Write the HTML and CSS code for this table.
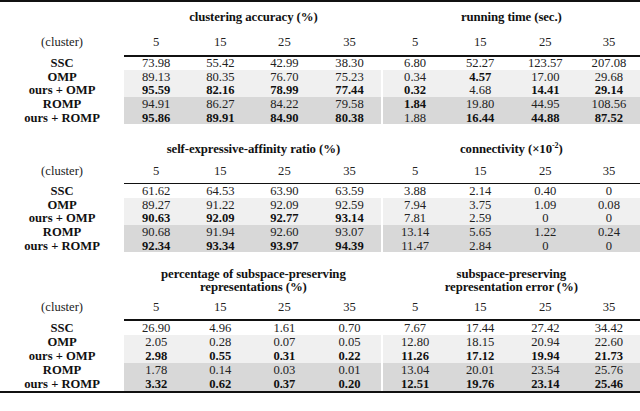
FILE: index.html
```html
<!DOCTYPE html>
<html lang="en">
<head>
<meta charset="utf-8">
<title>Results table</title>
<link rel="stylesheet" href="styles.css">
</head>
<body>
<table class="results">
  <colgroup>
    <col class="c-label">
    <col class="c-l"><col class="c-l"><col class="c-l"><col class="c-l c-gap">
    <col class="c-r"><col class="c-r"><col class="c-r"><col class="c-r c-last">
  </colgroup>

  <tbody class="panel p1">
    <tr class="head"><td></td><th colspan="4">clustering accuracy (%)</th><th colspan="4">running time (sec.)</th></tr>
    <tr class="clusters"><td class="label">(cluster)</td><td>5</td><td>15</td><td>25</td><td class="gap">35</td><td>5</td><td>15</td><td>25</td><td>35</td></tr>
    <tr class="rule"><td class="blank"></td><td colspan="8" class="line"></td></tr>
    <tr class="row ssc"><th class="label">SSC</th><td>73.98</td><td>55.42</td><td>42.99</td><td class="gap">38.30</td><td>6.80</td><td>52.27</td><td>123.57</td><td>207.08</td></tr>
    <tr class="row omp"><th class="label">OMP</th><td>89.13</td><td>80.35</td><td>76.70</td><td class="gap">75.23</td><td>0.34</td><td class="b">4.57</td><td>17.00</td><td>29.68</td></tr>
    <tr class="row omp"><th class="label">ours + OMP</th><td class="b">95.59</td><td class="b">82.16</td><td class="b">78.99</td><td class="gap b">77.44</td><td class="b">0.32</td><td>4.68</td><td class="b">14.41</td><td class="b">29.14</td></tr>
    <tr class="row romp"><th class="label">ROMP</th><td>94.91</td><td>86.27</td><td>84.22</td><td class="gap">79.58</td><td class="b">1.84</td><td>19.80</td><td>44.95</td><td>108.56</td></tr>
    <tr class="row romp"><th class="label">ours + ROMP</th><td class="b">95.86</td><td class="b">89.91</td><td class="b">84.90</td><td class="gap b">80.38</td><td>1.88</td><td class="b">16.44</td><td class="b">44.88</td><td class="b">87.52</td></tr>
  </tbody>

  <tbody class="panel p2">
    <tr class="head"><td></td><th colspan="4">self-expressive-affinity ratio (%)</th><th colspan="4">connectivity (×10<sup>-2</sup>)</th></tr>
    <tr class="clusters"><td class="label">(cluster)</td><td>5</td><td>15</td><td>25</td><td class="gap">35</td><td>5</td><td>15</td><td>25</td><td>35</td></tr>
    <tr class="rule"><td class="blank"></td><td colspan="8" class="line"></td></tr>
    <tr class="row ssc"><th class="label">SSC</th><td>61.62</td><td>64.53</td><td>63.90</td><td class="gap">63.59</td><td>3.88</td><td>2.14</td><td>0.40</td><td>0</td></tr>
    <tr class="row omp"><th class="label">OMP</th><td>89.27</td><td>91.22</td><td>92.09</td><td class="gap">92.59</td><td>7.94</td><td>3.75</td><td>1.09</td><td>0.08</td></tr>
    <tr class="row omp"><th class="label">ours + OMP</th><td class="b">90.63</td><td class="b">92.09</td><td class="b">92.77</td><td class="gap b">93.14</td><td>7.81</td><td>2.59</td><td>0</td><td>0</td></tr>
    <tr class="row romp"><th class="label">ROMP</th><td>90.68</td><td>91.94</td><td>92.60</td><td class="gap">93.07</td><td>13.14</td><td>5.65</td><td>1.22</td><td>0.24</td></tr>
    <tr class="row romp"><th class="label">ours + ROMP</th><td class="b">92.34</td><td class="b">93.34</td><td class="b">93.97</td><td class="gap b">94.39</td><td>11.47</td><td>2.84</td><td>0</td><td>0</td></tr>
  </tbody>

  <tbody class="panel p3">
    <tr class="head"><td></td><th colspan="4">percentage of subspace-preserving<br>representations (%)</th><th colspan="4">subspace-preserving<br>representation error (%)</th></tr>
    <tr class="clusters"><td class="label">(cluster)</td><td>5</td><td>15</td><td>25</td><td class="gap">35</td><td>5</td><td>15</td><td>25</td><td>35</td></tr>
    <tr class="rule"><td class="blank"></td><td colspan="8" class="line"></td></tr>
    <tr class="row ssc"><th class="label">SSC</th><td>26.90</td><td>4.96</td><td>1.61</td><td class="gap">0.70</td><td>7.67</td><td>17.44</td><td>27.42</td><td>34.42</td></tr>
    <tr class="row omp"><th class="label">OMP</th><td>2.05</td><td>0.28</td><td>0.07</td><td class="gap">0.05</td><td>12.80</td><td>18.15</td><td>20.94</td><td>22.60</td></tr>
    <tr class="row omp"><th class="label">ours + OMP</th><td class="b">2.98</td><td class="b">0.55</td><td class="b">0.31</td><td class="gap b">0.22</td><td class="b">11.26</td><td class="b">17.12</td><td class="b">19.94</td><td class="b">21.73</td></tr>
    <tr class="row romp"><th class="label">ROMP</th><td>1.78</td><td>0.14</td><td>0.03</td><td class="gap">0.01</td><td>13.04</td><td>20.01</td><td>23.54</td><td>25.76</td></tr>
    <tr class="row romp"><th class="label">ours + ROMP</th><td class="b">3.32</td><td class="b">0.62</td><td class="b">0.37</td><td class="gap b">0.20</td><td class="b">12.51</td><td class="b">19.76</td><td class="b">23.14</td><td class="b">25.46</td></tr>
  </tbody>
</table>
</body>
</html>
```

FILE: styles.css
```css
html, body {
  margin: 0;
  padding: 0;
  background: #ffffff;
}

body {
  width: 640px;
  height: 411px;
  overflow: hidden;
  font-family: "Liberation Serif", "Times New Roman", serif;
  font-size: 12.6px;
  color: #161616;
}

.results {
  table-layout: fixed;
  width: 640px;
  border-collapse: separate;
  border-spacing: 0;
  border-top: 2px solid #111;
  border-bottom: 2px solid #111;
}

.c-label { width: 124px; }
.c-l { width: 64px; }
.c-gap { width: 66px; }
.c-r { width: 65px; }
.c-last { width: 62px; }

.results td,
.results th {
  padding: 0;
  text-align: center;
  white-space: nowrap;
  line-height: 13px;
}

.results th {
  font-weight: bold;
  color: #111;
}

.head th {
  font-size: 12.8px;
  letter-spacing: -0.1px;
}

.p1 .head { height: 28px; }
.p1 .head th { vertical-align: middle; padding-top: 2px; }
.p2 .head { height: 35.5px; }
.p2 .head th { vertical-align: bottom; padding-bottom: 4px; }
.p3 .head { height: 44px; }
.p3 .head th { vertical-align: bottom; padding-bottom: 3px; line-height: 12.5px; }

sup {
  font-size: 8px;
  line-height: 0;
  vertical-align: 5px;
}

.clusters { height: 25px; }
.p2 .clusters { height: 23px; }
.p3 .clusters { height: 23px; }
.clusters td { vertical-align: middle; color: #222; }

.rule { height: 1.5px; }
.rule td { height: 1.5px; line-height: 0; font-size: 0; }
.rule .line { background: #111; }

.row { height: 13.6px; }
.p3 .row { height: 14px; }
.row td, .row th { vertical-align: middle; line-height: 12px; }

.row td { color: #222; }
.row td.b { font-weight: bold; color: #111; }

.omp td { background: #f0f0f0; }
.romp td { background: #d8d8d8; }

.row td.gap { box-shadow: inset -2px 0 0 #ffffff; }
```
